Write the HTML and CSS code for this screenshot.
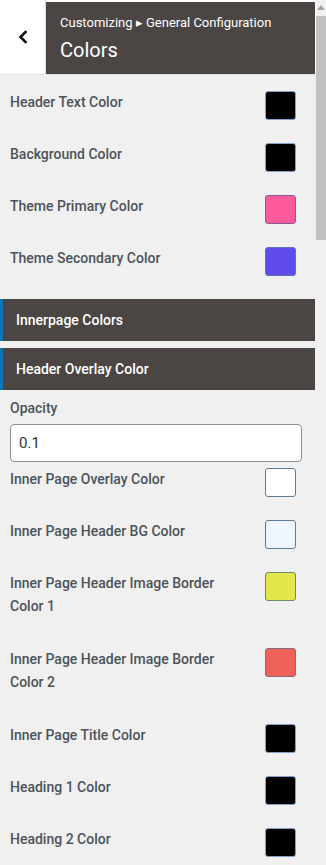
FILE: index.html
```html
<!DOCTYPE html>
<html lang="en">
<head>
    <meta charset="UTF-8">
    <meta name="viewport" content="width=device-width, initial-scale=1.0">
    <title>Colors</title>
    <link rel="stylesheet" href="styles.css">
</head>
<body>
    <div class="page">
        <div class="panel">
            <div class="topbar">
                <button class="back" aria-label="Back">
                    <svg width="10" height="14" viewBox="0 0 10 14">
                        <path d="M7.5 2 L2.5 7 L7.5 12" fill="none" stroke="#111" stroke-width="2.6" stroke-linecap="square"/>
                    </svg>
                </button>
                <div class="title-box">
                    <div class="crumb">Customizing &#9656; General Configuration</div>
                    <div class="title">Colors</div>
                </div>
            </div>

            <div class="controls">
                <div class="row">
                    <span class="label">Header Text Color</span>
                    <span class="swatch sw-black"></span>
                </div>
                <div class="row">
                    <span class="label">Background Color</span>
                    <span class="swatch sw-black"></span>
                </div>
                <div class="row">
                    <span class="label">Theme Primary Color</span>
                    <span class="swatch sw-pink"></span>
                </div>
                <div class="row">
                    <span class="label">Theme Secondary Color</span>
                    <span class="swatch sw-purple"></span>
                </div>
            </div>

            <div class="section">Innerpage Colors</div>
            <div class="section">Header Overlay Color</div>

            <div class="controls controls-sub">
                <div class="field">
                    <label for="opacity" class="label">Opacity</label>
                    <input type="text" id="opacity" value="0.1">
                </div>
                <div class="row">
                    <span class="label">Inner Page Overlay Color</span>
                    <span class="swatch sw-white"></span>
                </div>
                <div class="row">
                    <span class="label">Inner Page Header BG Color</span>
                    <span class="swatch sw-pale"></span>
                </div>
                <div class="row row-tall">
                    <span class="label">Inner Page Header Image Border Color 1</span>
                    <span class="swatch sw-yellow"></span>
                </div>
                <div class="row row-tall">
                    <span class="label">Inner Page Header Image Border Color 2</span>
                    <span class="swatch sw-red"></span>
                </div>
                <div class="row">
                    <span class="label">Inner Page Title Color</span>
                    <span class="swatch sw-black"></span>
                </div>
                <div class="row">
                    <span class="label">Heading 1 Color</span>
                    <span class="swatch sw-black"></span>
                </div>
                <div class="row">
                    <span class="label">Heading 2 Color</span>
                    <span class="swatch sw-black"></span>
                </div>
            </div>
        </div>

        <div class="scrollbar">
            <div class="arrow"></div>
            <div class="thumb"></div>
        </div>
    </div>
</body>
</html>
```

FILE: styles.css
```css
body {
    margin: 0;
    font-family: Roboto, "Noto Sans", sans-serif;
    background-color: #f0f0f0;
    overflow: hidden;
}
.page {
    display: flex;
    height: 865px;
}
.panel {
    width: 316px;
    flex-shrink: 0;
}
.topbar {
    display: flex;
    height: 75px;
    box-sizing: border-box;
    padding-top: 2px;
    background-color: #fff;
    border-bottom: 1px solid #e4e4e4;
}
.back {
    width: 46px;
    margin-top: -2px;
    padding: 0;
    border: none;
    border-right: 1px solid #dcdcdc;
    background-color: #fff;
    display: flex;
    align-items: center;
    justify-content: center;
}
.title-box {
    flex: 1;
    margin-right: 1px;
    background-color: #4b4644;
    color: #fff;
    padding: 13px 0 0 14px;
}
.crumb {
    font-size: 13px;
    line-height: 16px;
}
.title {
    margin-top: 6px;
    font-size: 20px;
    line-height: 26px;
}
.controls {
    padding: 16px 20px 0 10px;
}
.controls-sub {
    padding-top: 0;
}
.row {
    display: flex;
    justify-content: space-between;
    align-items: flex-start;
    margin-bottom: 23px;
}
.row-tall {
    margin-bottom: 30px;
}
.label {
    display: block;
    max-width: 215px;
    font-size: 14px;
    line-height: 23px;
    font-weight: 500;
    color: #4c535a;
}
.swatch {
    width: 31px;
    height: 29px;
    box-sizing: border-box;
    border: 1px solid #5d7c98;
    border-radius: 3px;
    flex-shrink: 0;
}
.sw-black { background-color: #000; border-color: #7fa3c4; }
.sw-pink { background-color: #fd5c9c; border-color: #8a5a96; }
.sw-purple { background-color: #5e4be8; border-color: #5e6fc8; }
.sw-white { background-color: #fff; }
.sw-pale { background-color: #eef5fc; }
.sw-yellow { background-color: #e3e84a; border-color: #6e8a6a; }
.sw-red { background-color: #ef6259; border-color: #8a6a7a; }
.section {
    width: 315px;
    height: 42px;
    box-sizing: border-box;
    margin-bottom: 7px;
    padding-left: 13px;
    border-left: 3px solid #0f73b4;
    background-color: #4b4644;
    color: #fff;
    font-size: 14px;
    font-weight: 500;
    line-height: 42px;
}
.field {
    margin-bottom: 6px;
}
.field .label {
    margin-bottom: 4px;
}
.field input {
    display: block;
    width: 292px;
    height: 38px;
    box-sizing: border-box;
    padding: 0 8px;
    border: 1px solid #8c8f94;
    border-radius: 4px;
    background-color: #fff;
    font-family: Roboto, "Noto Sans", sans-serif;
    font-size: 15px;
    color: #2c3338;
}
.scrollbar {
    width: 10px;
    background-color: #f1f1f1;
    padding-top: 3px;
}
.arrow {
    width: 0;
    height: 0;
    margin: 2px auto 0;
    border-left: 4px solid transparent;
    border-right: 4px solid transparent;
    border-bottom: 5px solid #a3a3a3;
}
.thumb {
    height: 224px;
    margin-top: 6px;
    background-color: #c1c1c1;
}
```
